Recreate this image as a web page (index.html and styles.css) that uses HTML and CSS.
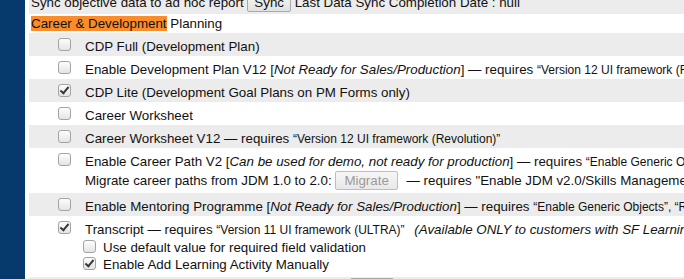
FILE: index.html
```html
<!DOCTYPE html>
<html lang="en">
<head>
    <meta charset="UTF-8">
    <title>Provisioning - Career &amp; Development Planning</title>
    <link rel="stylesheet" href="styles.css">
</head>
<body>
    <div class="sidebar"></div>
    <div class="main">
        <div class="row-top alt">Sync objective data to ad hoc report <button class="btn">Sync</button> Last Data Sync Completion Date : null</div>

        <div class="section-title"><span class="hl">Career &amp; Development</span> Planning</div>

        <div class="row alt">
            <div class="check"><input type="checkbox"></div>
            <div class="label">CDP Full (Development Plan)</div>
        </div>
        <div class="row">
            <div class="check"><input type="checkbox"></div>
            <div class="label">Enable Development Plan V12 [<i>Not Ready for Sales/Production</i>] &mdash; requires <span class="q">&ldquo;Version 12 UI framework (Revolution)&rdquo;</span></div>
        </div>
        <div class="row alt">
            <div class="check"><input type="checkbox" checked></div>
            <div class="label">CDP Lite (Development Goal Plans on PM Forms only)</div>
        </div>
        <div class="row">
            <div class="check"><input type="checkbox"></div>
            <div class="label">Career Worksheet</div>
        </div>
        <div class="row alt">
            <div class="check"><input type="checkbox"></div>
            <div class="label">Career Worksheet V12 &mdash; requires <span class="q">&ldquo;Version 12 UI framework (Revolution)&rdquo;</span></div>
        </div>
        <div class="row">
            <div class="check"><input type="checkbox"></div>
            <div class="label">
                <div>Enable Career Path V2 [<i>Can be used for demo, not ready for production</i>] &mdash; requires <span class="q">&ldquo;Enable Generic Objects&rdquo;</span></div>
                <div class="migrate-line">Migrate career paths from JDM 1.0 to 2.0: <button class="btn btn-migrate" disabled>Migrate</button> &mdash; requires "Enable JDM v2.0/Skills Management"</div>
            </div>
        </div>
        <div class="row alt">
            <div class="check"><input type="checkbox"></div>
            <div class="label">Enable Mentoring Programme [<i>Not Ready for Sales/Production</i>] &mdash; requires <span class="q">&ldquo;Enable Generic Objects&rdquo;, &ldquo;Role-based Permissions&rdquo;</span></div>
        </div>
        <div class="row row-transcript">
            <div class="check"><input type="checkbox" checked></div>
            <div class="label">
                <div>Transcript &mdash; requires <span class="q">&ldquo;Version 11 UI framework (ULTRA)&rdquo;</span> <i class="avail">(Available ONLY to customers with SF Learning)</i></div>
                <label class="sub first"><input type="checkbox"> Use default value for required field validation</label>
                <label class="sub"><input type="checkbox" checked> Enable Add Learning Activity Manually</label>
            </div>
        </div>
        <div class="row alt actions">
            <button class="btn">Save</button>
        </div>
    </div>
</body>
</html>
```

FILE: styles.css
```css
html, body {
    margin: 0;
    height: 100%;
    overflow: hidden;
}
body {
    display: flex;
    font-family: "Liberation Sans", Arial, sans-serif;
    font-size: 13.33px;
    color: #111;
    background-color: #fff;
}
.sidebar {
    flex: none;
    width: 25px;
    background-color: #063a6c;
}
.main {
    flex: 1;
    min-width: 0;
    margin-left: 4px;
    margin-top: -9px;
    white-space: nowrap;
}
.alt {
    background-color: #ececec;
}
.row-top {
    height: 19px;
    padding: 2px 2px;
}
.section-title {
    padding: 2px 2px;
    height: 15px;
}
.hl {
    background-color: #fb8c2b;
}
.row {
    display: flex;
    min-height: 23px;
}
.check {
    flex: none;
    width: 13px;
    padding: 5px 14px 0 29px;
}
.label {
    padding: 6px 0 2px;
}
.q {
    font-size: 12px;
}
.avail {
    margin-left: 6px;
}
.migrate-line {
    margin-top: 2px;
    margin-bottom: 1px;
}
.row-transcript .label {
    padding-bottom: 3px;
}
.sub {
    display: flex;
    align-items: flex-start;
    height: 17px;
}
.sub.first {
    margin-top: 3px;
}
.actions {
    padding: 1px 0 0 321px;
}

/* buttons */
.btn {
    font: inherit;
    color: #111;
    padding: 1px 6px;
    border: 1px solid #a9a9a9;
    border-radius: 2px;
    background: linear-gradient(#f7f7f7, #e1e1e1);
}
.btn:disabled {
    color: #9a9a9a;
    border-color: #bdbdbd;
    background: linear-gradient(#f6f6f6, #e8e8e8);
}
.btn-migrate {
    padding: 1px 8px;
    margin-right: 5px;
}

/* checkboxes */
input[type="checkbox"] {
    -webkit-appearance: none;
    appearance: none;
    display: block;
    position: relative;
    width: 13px;
    height: 13px;
    margin: 0;
    box-sizing: border-box;
    border: 1px solid #a3a3a3;
    border-radius: 3px;
    background: linear-gradient(#fdfdfd, #e4e4e4);
}
.sub input[type="checkbox"] {
    flex: none;
    margin: 0 7px 0 -2px;
}
input[type="checkbox"]:checked::after {
    content: "";
    position: absolute;
    left: 3px;
    top: 0px;
    width: 3px;
    height: 7px;
    border-right: 2px solid #3a3a3a;
    border-bottom: 2px solid #3a3a3a;
    transform: rotate(40deg);
}
```
